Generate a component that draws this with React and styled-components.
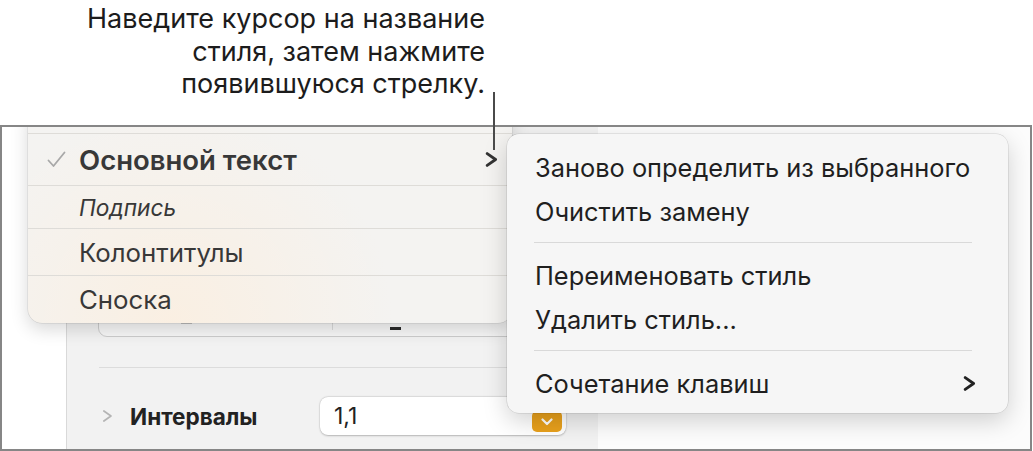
import React from "react";
import styled, { createGlobalStyle } from "styled-components";

const FONT = `"Inter", "Liberation Sans", sans-serif`;

const Global = createGlobalStyle`
  html, body {
    margin: 0;
    padding: 0;
    background: #ffffff;
  }
  body {
    font-family: ${FONT};
    -webkit-font-smoothing: antialiased;
  }
`;

const Page = styled.div`
  position: relative;
  width: 1033px;
  height: 451px;
  overflow: hidden;
  background: #ffffff;
`;

// Callout above the screenshot
const Callout = styled.div`
  width: 485px;
  height: 125px;
  box-sizing: border-box;
  padding-top: 3px;
  text-align: right;
  font-size: 27px;
  line-height: 32.5px;
  color: #1c1c1c;
`;

const LeaderLine = styled.div`
  position: absolute;
  left: 493px;
  top: 92px;
  width: 1.5px;
  height: 58px;
  background: #4a4a4a;
  z-index: 5;
`;

// Framed app screenshot
const Frame = styled.div`
  position: relative;
  display: flex;
  width: 1032px;
  height: 326px;
  box-sizing: border-box;
  border: 2px solid #868686;
  overflow: hidden;
`;

const Sidebar = styled.div`
  width: 64px;
  flex-shrink: 0;
  background: #ffffff;
  border-right: 1.5px solid #d9d9d9;
`;

const Inspector = styled.div`
  width: 531px;
  flex-shrink: 0;
  display: flex;
  flex-direction: column;
  background: #f2f2f2;
`;

const Canvas = styled.div`
  flex: 1;
  background: #fcfcfc;
`;

const SegBox = styled.div`
  display: flex;
  margin: 150px 0 0 31px;
  width: 469px;
  height: 60px;
  box-sizing: border-box;
  border: 1px solid #cdcdcd;
  border-radius: 9px;
  background: #f7f7f7;
`;

const SegCell = styled.div`
  display: flex;
  align-items: flex-end;
  width: ${(p) => p.$width}px;
  padding: 0 0 6px ${(p) => p.$pad}px;
  box-sizing: border-box;
  border-right: ${(p) => (p.$divider ? "1px solid #dadada" : "none")};
  margin-bottom: ${(p) => (p.$divider ? "6px" : "0")};
`;

const Dash = styled.span`
  width: 11px;
  height: ${(p) => (p.$dark ? "3px" : "2px")};
  background: ${(p) => (p.$dark ? "#2a2a2a" : "#c4c4c4")};
`;

const Divider = styled.div`
  height: 1px;
  margin: 30px 0 0 32px;
  background: #dcdcdc;
`;

const PropRow = styled.div`
  display: flex;
  align-items: center;
  margin-top: 29px;
  padding-left: 35px;
  height: 38px;
`;

const RowLabel = styled.span`
  margin-left: 17px;
  width: 190px;
  font-size: 22.5px;
  font-weight: 700;
  color: #222222;
`;

const ValueField = styled.div`
  position: relative;
  display: flex;
  align-items: center;
  width: 246px;
  height: 38px;
  box-sizing: border-box;
  padding-left: 14px;
  border-radius: 8px;
  background: #ffffff;
  box-shadow: 0 0.5px 2px rgba(0, 0, 0, 0.22), 0 0 0 0.5px rgba(0, 0, 0, 0.08);
  font-size: 23px;
  color: #222222;
`;

const StepButton = styled.div`
  position: absolute;
  right: 4px;
  bottom: 3px;
  width: 30px;
  height: 21px;
  display: flex;
  align-items: center;
  justify-content: center;
  border-radius: 5px;
  background: #e9a11c;
`;

// Style list popup
const StyleMenu = styled.div`
  position: absolute;
  left: 26px;
  top: -16px;
  width: 484px;
  padding-top: 22px;
  border-radius: 0 0 14px 14px;
  background:
    radial-gradient(circle at 30% 100%, rgba(255, 236, 214, 0.55), rgba(255, 236, 214, 0) 55%),
    #f4f3f1;
  box-shadow: 0 6px 18px rgba(0, 0, 0, 0.16), 0 0 0 0.5px rgba(0, 0, 0, 0.12);
  z-index: 2;
`;

const StyleRow = styled.div`
  display: flex;
  align-items: center;
  height: ${(p) => p.$h}px;
  box-sizing: border-box;
  border-top: 1px solid #dedcd8;
  padding-right: 14px;
  color: #383838;
  font-size: ${(p) => p.$size}px;
  font-weight: ${(p) => p.$weight || 400};
  font-style: ${(p) => (p.$italic ? "italic" : "normal")};
`;

const CheckCell = styled.span`
  display: flex;
  justify-content: flex-end;
  width: 38px;
  margin-right: 13px;
  flex-shrink: 0;
`;

const RowText = styled.span`
  flex: 1;
`;

// Context submenu
const ContextMenu = styled.div`
  position: absolute;
  left: 505px;
  top: 7px;
  width: 501px;
  box-sizing: border-box;
  padding: 11px 0 8px;
  border-radius: 12px;
  background: #f6f6f6;
  box-shadow: 0 8px 24px rgba(0, 0, 0, 0.18), 0 0 0 0.5px rgba(0, 0, 0, 0.14);
  z-index: 3;
`;

const MenuItem = styled.div`
  display: flex;
  align-items: center;
  justify-content: space-between;
  height: 44px;
  padding: 0 32px 0 28px;
  font-size: 25.4px;
  color: #1f1f1f;
`;

const MenuSeparator = styled.div`
  height: 1px;
  margin: 9px 36px 10px 27px;
  background: #d9d9d9;
`;

const Chevron = ({ color = "#333", w = 13, h = 15, stroke = 2.8 }) => (
  <svg width={w} height={h} viewBox="0 0 13 15">
    <polyline
      points="2.2,1.6 10.6,7.5 2.2,13.4"
      fill="none"
      stroke={color}
      strokeWidth={stroke}
      strokeLinecap="round"
      strokeLinejoin="round"
    />
  </svg>
);

const Check = () => (
  <svg width="19" height="17" viewBox="0 0 19 17">
    <polyline
      points="1.5,9.5 6.5,15 17.5,1.5"
      fill="none"
      stroke="#a8a8a8"
      strokeWidth="1.8"
      strokeLinecap="round"
      strokeLinejoin="round"
    />
  </svg>
);

const ChevronDown = () => (
  <svg width="12" height="8" viewBox="0 0 12 8">
    <polyline
      points="1.5,1.5 6,6 10.5,1.5"
      fill="none"
      stroke="#ffffff"
      strokeWidth="2.2"
      strokeLinecap="round"
      strokeLinejoin="round"
    />
  </svg>
);

export default function App() {
  return (
    <Page>
      <Global />
      <Callout>
        Наведите курсор на название
        <br />
        стиля, затем нажмите
        <br />
        появившуюся стрелку.
      </Callout>
      <LeaderLine />

      <Frame>
        <Sidebar />
        <Inspector>
          <SegBox>
            <SegCell $width={234} $pad={82} $divider>
              <Dash />
            </SegCell>
            <SegCell $width={200} $pad={57}>
              <Dash $dark />
            </SegCell>
          </SegBox>
          <Divider />
          <PropRow>
            <Chevron color="#b4b4b4" w={11} h={16} stroke={2} />
            <RowLabel>Интервалы</RowLabel>
            <ValueField>
              1,1
              <StepButton>
                <ChevronDown />
              </StepButton>
            </ValueField>
          </PropRow>
        </Inspector>
        <Canvas />

        <StyleMenu>
          <StyleRow $h={52} $size={27.5} $weight={600}>
            <CheckCell>
              <Check />
            </CheckCell>
            <RowText>Основной текст</RowText>
            <Chevron color="#333" />
          </StyleRow>
          <StyleRow $h={43} $size={22.7} $italic>
            <CheckCell />
            <RowText>Подпись</RowText>
          </StyleRow>
          <StyleRow $h={47} $size={25.8}>
            <CheckCell />
            <RowText>Колонтитулы</RowText>
          </StyleRow>
          <StyleRow $h={48} $size={25.8}>
            <CheckCell />
            <RowText>Сноска</RowText>
          </StyleRow>
        </StyleMenu>

        <ContextMenu>
          <MenuItem>Заново определить из выбранного</MenuItem>
          <MenuItem>Очистить замену</MenuItem>
          <MenuSeparator />
          <MenuItem>Переименовать стиль</MenuItem>
          <MenuItem>Удалить стиль...</MenuItem>
          <MenuSeparator />
          <MenuItem>
            Сочетание клавиш
            <Chevron color="#222" />
          </MenuItem>
        </ContextMenu>
      </Frame>
    </Page>
  );
}
